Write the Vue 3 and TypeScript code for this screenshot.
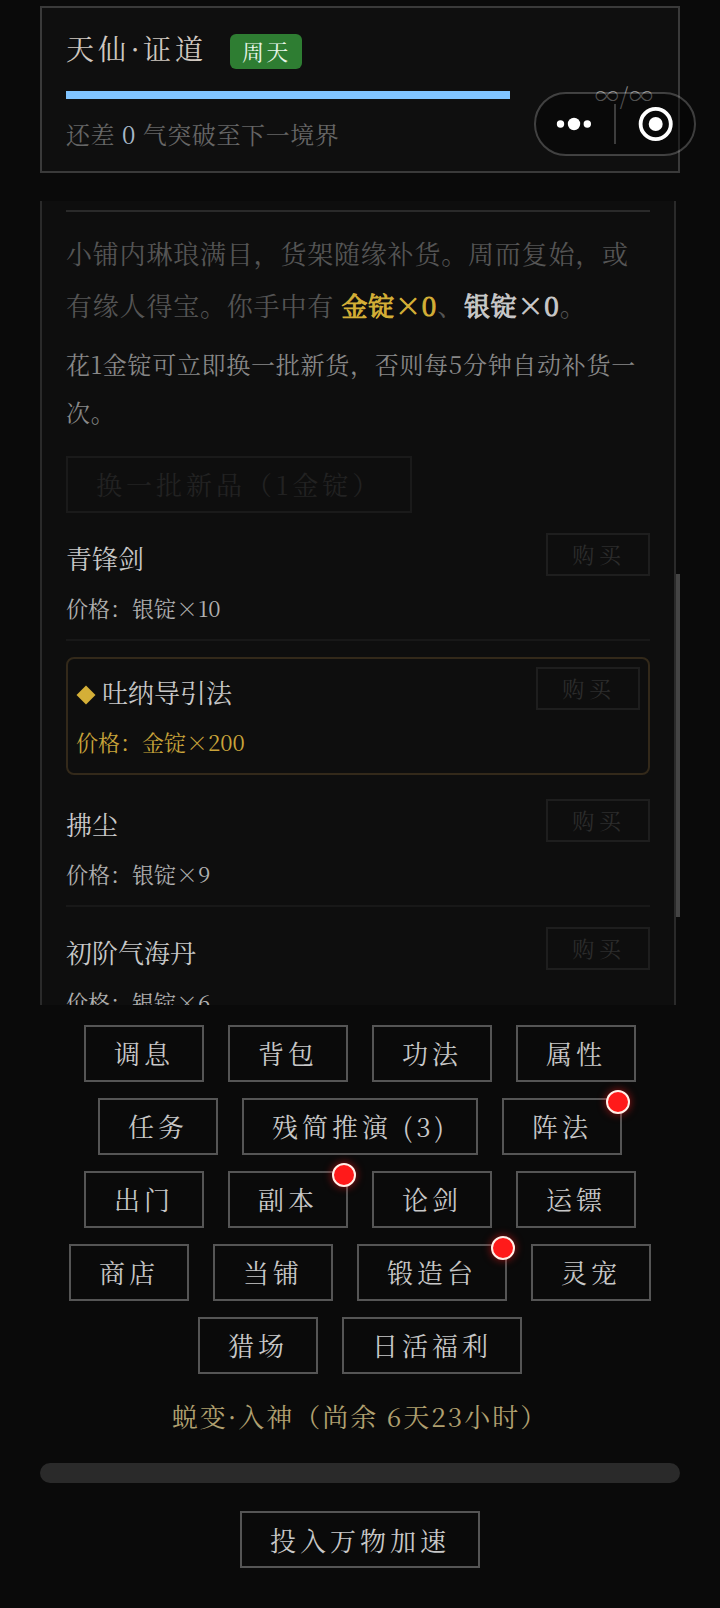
<script setup lang="ts">
interface Ware {
  name: string
  metal: string
  price: string
  rare?: boolean
}

interface Action {
  label: string
  count?: string
  alert?: boolean
}

const wares: Ware[] = [
  { name: '青锋剑', metal: '银锭', price: '10' },
  { name: '吐纳导引法', metal: '金锭', price: '200', rare: true },
  { name: '拂尘', metal: '银锭', price: '9' },
  { name: '初阶气海丹', metal: '银锭', price: '6' },
]

const rows: Action[][] = [
  [{ label: '调息' }, { label: '背包' }, { label: '功法' }, { label: '属性' }],
  [{ label: '任务' }, { label: '残简推演', count: '(3)' }, { label: '阵法', alert: true }],
  [{ label: '出门' }, { label: '副本', alert: true }, { label: '论剑' }, { label: '运镖' }],
  [{ label: '商店' }, { label: '当铺' }, { label: '锻造台', alert: true }, { label: '灵宠' }],
  [{ label: '猎场' }, { label: '日活福利' }],
]
</script>

<template>
  <main class="screen">
    <header class="status">
      <div class="title-row">
        <h1>天仙<i class="dot">·</i>证道</h1>
        <span class="badge">周天</span>
      </div>
      <div class="progress-row">
        <div class="progress"></div>
        <span class="limit">∞/∞</span>
      </div>
      <p class="remain">还差 <b>0</b> 气突破至下一境界</p>
    </header>

    <div class="capsule">
      <svg width="162" height="64" viewBox="0 0 162 64">
        <rect x="1" y="1" width="160" height="62" rx="31" fill="#000" fill-opacity=".4" stroke="#fff" stroke-opacity=".22" stroke-width="2" />
        <path d="M81 12V52" stroke="#3d3d3d" stroke-width="2" />
        <g fill="#fff">
          <circle cx="26.5" cy="32" r="3.7" />
          <circle cx="40" cy="32" r="6.2" />
          <circle cx="53.3" cy="32" r="3.7" />
          <circle cx="121.7" cy="32" r="7" />
        </g>
        <circle cx="121.7" cy="32" r="15.1" fill="none" stroke="#fff" stroke-width="3.8" />
      </svg>
    </div>

    <section class="panel">
      <div class="shop">
        <p class="intro">
          小铺内琳琅满目，货架随缘补货。周而复始，或<br />有缘人得宝。你手中有
          <strong class="gold">金锭×0</strong>、<strong class="silver">银锭×0</strong>。
        </p>
        <p class="hint">花1金锭可立即换一批新货，否则每5分钟自动补货一<br />次。</p>
        <button class="btn refresh">换一批新品（1金锭）</button>
        <article v-for="w in wares" :key="w.name" class="ware" :class="{ rare: w.rare }">
          <div class="info">
            <div class="name"><svg v-if="w.rare" class="gem" width="20" height="20" viewBox="0 0 20 20"><path d="M10 .5 19.5 10 10 19.5 .5 10Z" fill="#d4af37" /></svg>{{ w.name }}</div>
            <div class="price">价格：{{ w.metal }}×{{ w.price }}</div>
          </div>
          <button class="buy">购买</button>
        </article>
      </div>
      <div class="track"><div class="thumb"></div></div>
    </section>

    <nav class="actions">
      <div v-for="(row, i) in rows" :key="i" class="row">
        <button v-for="a in row" :key="a.label" class="btn">
          {{ a.label }}<span v-if="a.count" class="count">{{ a.count }}</span>
          <span v-if="a.alert" class="alert"></span>
        </button>
      </div>
    </nav>

    <p class="event">蜕变·入神（尚余 6天23小时）</p>
    <div class="meter"></div>
    <div class="row"><button class="btn boost">投入万物加速</button></div>
  </main>
</template>

<style>
body {
  background: #0a0a0a;
}
</style>

<style scoped>
.screen {
  position: relative;
  box-sizing: border-box;
  width: 720px;
  height: 1608px;
  padding: 6px 40px 0;
  overflow: hidden;
  background: #0a0a0a;
  color: #c8c8c8;
  font-family: "Noto Serif CJK SC", "Noto Serif SC", "Liberation Serif", "Noto Sans CJK SC", serif;
  font-weight: 400;
}
p,
h1 {
  margin: 0;
  font-weight: inherit;
}
i {
  font-style: normal;
}
button {
  box-sizing: border-box;
  background: transparent;
  color: inherit;
  font: inherit;
  white-space: nowrap;
}
.status {
  box-sizing: border-box;
  height: 167px;
  padding: 0 24px;
  border: 2px solid #3a3a3a;
  background: #0f0f0f;
}
.title-row {
  display: flex;
  align-items: center;
  height: 83px;
}
h1 {
  width: 164px;
  margin-top: -4px;
  color: #d0c8c0;
  font-size: 28px;
  line-height: 40px;
  letter-spacing: 4px;
  white-space: nowrap;
}
h1 .dot {
  display: inline-block;
  width: 14px;
  margin: 0 1px 0 -2px;
  letter-spacing: 0;
  text-align: center;
}
.badge {
  box-sizing: border-box;
  width: 72px;
  height: 35px;
  margin-top: 4px;
  padding-left: 12px;
  border-radius: 6px;
  background: #2e7d32;
  color: #e8f5e9;
  font-size: 22px;
  line-height: 33px;
  letter-spacing: 2.2px;
}
.progress-row {
  display: flex;
  align-items: center;
  gap: 20px;
  height: 8px;
}
.progress {
  width: 444px;
  height: 8px;
  background: #80c4ff;
}
.limit {
  flex: 1;
  color: #888;
  font-size: 24px;
  line-height: 30px;
  letter-spacing: 0.9px;
  text-align: right;
}
.remain {
  margin-top: 11px;
  color: #666;
  font-size: 24px;
  line-height: 48px;
  letter-spacing: 0.6px;
}
.remain b {
  color: #a8b8c8;
  font-weight: 400;
}
.capsule {
  position: absolute;
  top: 92px;
  left: 534px;
  height: 64px;
}
.panel {
  display: flex;
  height: 804px;
  margin-top: 28px;
  overflow: hidden;
}
.shop {
  box-sizing: border-box;
  width: 636px;
  height: 920px;
  padding: 9px 24px 0;
  border: solid #2a2a2a;
  border-width: 0 2px;
  background: #0e0e0e;
}
.track {
  width: 4px;
  padding-top: 373px;
}
.thumb {
  height: 343px;
  background: #444;
}
.intro {
  padding-top: 15px;
  border-top: 2px solid #2a2a2a;
  color: #555;
  font-size: 26px;
  line-height: 52px;
  letter-spacing: 0.8px;
}
.intro strong {
  font-weight: 400;
  -webkit-text-stroke: 1px currentColor;
}
.gold {
  color: #d4af37;
}
.silver {
  color: #c8c8c8;
}
.hint {
  margin-top: 9px;
  color: #888;
  font-size: 24px;
  line-height: 48px;
  letter-spacing: 0.72px;
}
.btn {
  position: relative;
  height: 57px;
  padding: 0 28px 1px;
  border: 2px solid #555;
  font-size: 26px;
  line-height: 52px;
  letter-spacing: 4px;
}
.refresh {
  display: block;
  width: 346px;
  margin: 20px 0 20px;
  border-color: #1a1a1a;
  color: #222;
}
.boost {
  padding: 1px 28px 0;
}
.ware {
  display: flex;
  justify-content: space-between;
  height: 106px;
  margin-bottom: 20px;
  border-bottom: 2px solid #181818;
}
.ware:first-of-type {
  margin-bottom: 16px;
}
.ware.rare {
  box-sizing: border-box;
  height: 118px;
  margin-bottom: 24px;
  padding: 8px 8px 0;
  border: 2px solid #33291a;
  border-radius: 8px;
}
.info {
  margin-top: -1px;
}
.name {
  display: flex;
  align-items: center;
  gap: 6px;
  font-size: 26px;
  line-height: 52px;
}
.gem {
  margin-top: 5px;
}
.price {
  color: #b0b0b0;
  font-size: 22px;
  line-height: 48px;
}
.rare .price {
  color: #c9a43a;
}
.buy {
  width: 104px;
  height: 43px;
  padding: 0 0 1px 2px;
  border: 2px solid #1e1e1e;
  color: #2c2c2c;
  font-size: 22px;
  line-height: 38px;
  letter-spacing: 4.8px;
}
.actions {
  display: flex;
  flex-direction: column;
  gap: 16px;
  margin-top: 20px;
}
.row {
  display: flex;
  justify-content: center;
  gap: 24px;
}
.count {
  display: inline-block;
  width: 56px;
  text-align: right;
}
.alert {
  position: absolute;
  top: -10px;
  right: -10px;
  box-sizing: border-box;
  width: 24px;
  height: 24px;
  border: 2px solid #fff0e8;
  border-radius: 50%;
  background: #ff1a1a;
  box-shadow: 0 0 8px rgba(255, 26, 26, 0.6);
}
.event {
  margin-top: 16px;
  color: #b0a070;
  font-size: 26px;
  line-height: 52px;
  letter-spacing: 2px;
  text-align: center;
}
.meter {
  height: 20px;
  margin: 21px 0 28px;
  border-radius: 10px;
  background: #2a2a2a;
}
</style>
